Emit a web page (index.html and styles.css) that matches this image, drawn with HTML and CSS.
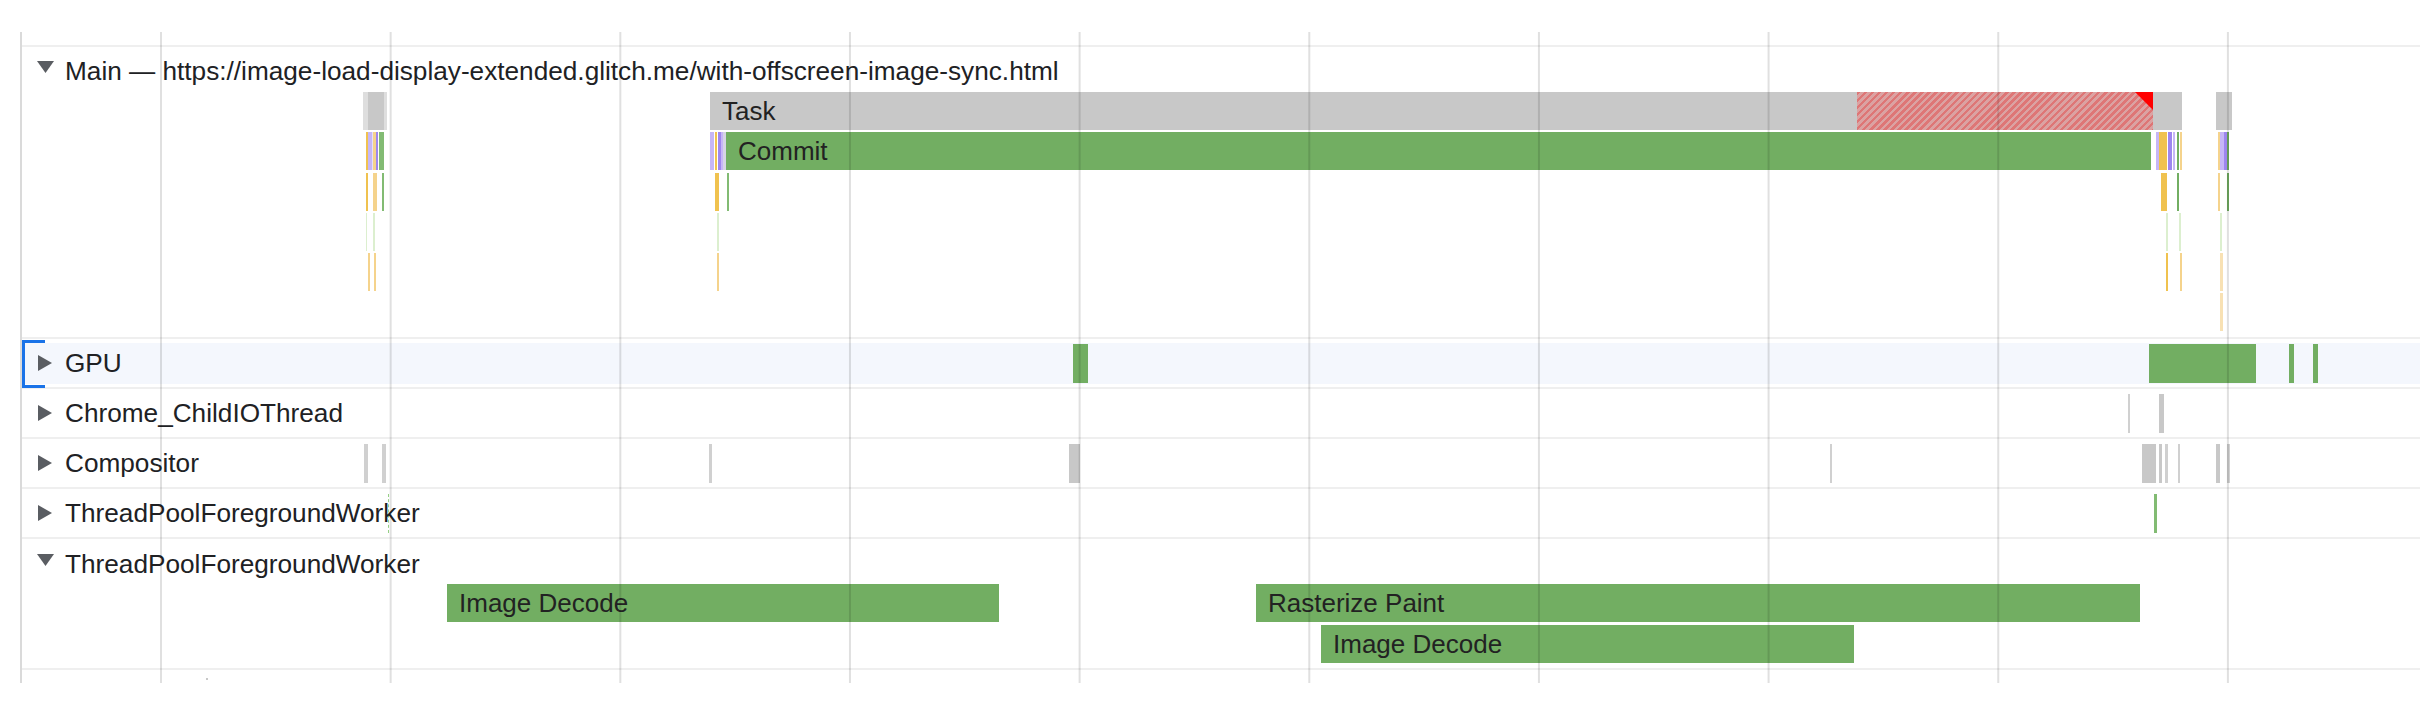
FILE: index.html
```html
<!DOCTYPE html>
<html lang="en">
<head>
<meta charset="utf-8">
<title>Performance timeline</title>
<link rel="stylesheet" href="styles.css">
</head>
<body>
<div class="timeline">
  <section class="track main">
    <div class="track-head"><svg class="tri-down" width="17" height="12" viewBox="0 0 17 12"><polygon points="0,0 17,0 8.5,12"/></svg><span class="name">Main — https://image-load-display-extended.glitch.me/with-offscreen-image-sync.html</span></div>
    <div class="flame main-flame">
      <!-- level 0 -->
      <div class="b l0 gyl" style="left:341px;width:5px"></div>
      <div class="b l0 gy" style="left:346px;width:16px"></div>
      <div class="b l0 gyl" style="left:362px;width:3px"></div>
      <div class="b l0 gy lbl" style="left:688px;width:1472px">Task<span class="hatch" style="left:1147px;width:296px"><span class="flag"></span></span></div>
      <div class="b l0 gy" style="left:2194px;width:16px"></div>
      <!-- level 1 -->
      <div class="b l1 y" style="left:344px;width:2px"></div>
      <div class="b l1 pl" style="left:346px;width:4px"></div>
      <div class="b l1 pll" style="left:350px;width:1px"></div>
      <div class="b l1 yl" style="left:351px;width:3px"></div>
      <div class="b l1 p" style="left:354px;width:2px"></div>
      <div class="b l1 gl" style="left:357px;width:5px"></div>
      <div class="b l1 pl" style="left:688px;width:4px"></div>
      <div class="b l1 y" style="left:693px;width:2px"></div>
      <div class="b l1 p" style="left:696px;width:3px"></div>
      <div class="b l1 pl" style="left:699px;width:2px"></div>
      <div class="b l1 pg" style="left:701px;width:3px"></div>
      <div class="b l1 g lbl" style="left:704px;width:1425px">Commit</div>
      <div class="b l1 pl" style="left:2134px;width:3px"></div>
      <div class="b l1 y" style="left:2137px;width:8px"></div>
      <div class="b l1 p" style="left:2146px;width:4px"></div>
      <div class="b l1 pl" style="left:2151px;width:2px"></div>
      <div class="b l1 g" style="left:2155px;width:2px"></div>
      <div class="b l1 yl" style="left:2158px;width:2px"></div>
      <div class="b l1 yl" style="left:2196px;width:2px"></div>
      <div class="b l1 pl" style="left:2198px;width:4px"></div>
      <div class="b l1 p" style="left:2202px;width:3px"></div>
      <div class="b l1 g" style="left:2205px;width:2px"></div>
      <!-- level 2 -->
      <div class="b l2 y" style="left:344px;width:2px"></div>
      <div class="b l2 yl" style="left:351px;width:4px"></div>
      <div class="b l2 gl" style="left:360px;width:2px"></div>
      <div class="b l2 y" style="left:693px;width:4px"></div>
      <div class="b l2 gl" style="left:705px;width:2px"></div>
      <div class="b l2 y" style="left:2139px;width:6px"></div>
      <div class="b l2 g" style="left:2155px;width:2px"></div>
      <div class="b l2 yl" style="left:2196px;width:2px"></div>
      <div class="b l2 g" style="left:2205px;width:2px"></div>
      <!-- level 3 -->
      <div class="b l3 lg" style="left:344px;width:1px"></div>
      <div class="b l3 lg" style="left:351px;width:2px"></div>
      <div class="b l3 lg" style="left:695px;width:2px"></div>
      <div class="b l3 lg" style="left:2144px;width:2px"></div>
      <div class="b l3 lg" style="left:2157px;width:2px"></div>
      <div class="b l3 lg" style="left:2198px;width:2px"></div>
      <!-- level 4 -->
      <div class="b l4 yl" style="left:346px;width:2px"></div>
      <div class="b l4 yl" style="left:352px;width:2px"></div>
      <div class="b l4 yl" style="left:695px;width:2px"></div>
      <div class="b l4 y" style="left:2144px;width:2px"></div>
      <div class="b l4 yl" style="left:2158px;width:2px"></div>
      <div class="b l4 yll" style="left:2198px;width:3px"></div>
      <!-- level 5 -->
      <div class="b l5 yll" style="left:2198px;width:3px"></div>
    </div>
  </section>

  <section class="row gpu">
    <div class="hl"></div>
    <div class="bracket"></div>
    <div class="row-head"><svg class="tri-right" width="14" height="16" viewBox="0 0 14 16"><polygon points="0,0 14,8 0,16"/></svg><span class="name">GPU</span></div>
    <div class="rb g" style="left:1051px;width:15px"></div>
    <div class="rb g" style="left:2127px;width:107px"></div>
    <div class="rb g" style="left:2267px;width:5px"></div>
    <div class="rb g" style="left:2291px;width:5px"></div>
  </section>

  <section class="row">
    <div class="row-head"><svg class="tri-right" width="14" height="16" viewBox="0 0 14 16"><polygon points="0,0 14,8 0,16"/></svg><span class="name">Chrome_ChildIOThread</span></div>
    <div class="rb gyt" style="left:2106px;width:2px"></div>
    <div class="rb gy" style="left:2137px;width:5px"></div>
  </section>

  <section class="row">
    <div class="row-head"><svg class="tri-right" width="14" height="16" viewBox="0 0 14 16"><polygon points="0,0 14,8 0,16"/></svg><span class="name">Compositor</span></div>
    <div class="rb gyt" style="left:342px;width:4px"></div>
    <div class="rb gyt" style="left:360px;width:4px"></div>
    <div class="rb gyt" style="left:687px;width:3px"></div>
    <div class="rb gy" style="left:1047px;width:11px"></div>
    <div class="rb gyt" style="left:1808px;width:2px"></div>
    <div class="rb gy" style="left:2120px;width:14px"></div>
    <div class="rb gy" style="left:2137px;width:3px"></div>
    <div class="rb gyt" style="left:2143px;width:3px"></div>
    <div class="rb gyt" style="left:2156px;width:2px"></div>
    <div class="rb gy" style="left:2194px;width:4px"></div>
    <div class="rb gyt" style="left:2205px;width:3px"></div>
  </section>

  <section class="row">
    <div class="row-head"><svg class="tri-right" width="14" height="16" viewBox="0 0 14 16"><polygon points="0,0 14,8 0,16"/></svg><span class="name">ThreadPoolForegroundWorker</span></div>
    <div class="rb dotted" style="left:366px;width:1px"></div>
    <div class="rb gl" style="left:2132px;width:3px"></div>
  </section>

  <section class="track worker">
    <div class="track-head"><svg class="tri-down" width="17" height="12" viewBox="0 0 17 12"><polygon points="0,0 17,0 8.5,12"/></svg><span class="name">ThreadPoolForegroundWorker</span></div>
    <div class="flame worker-flame">
      <div class="b l0 g lbl" style="left:425px;width:552px">Image Decode</div>
      <div class="b l0 g lbl" style="left:1234px;width:884px">Rasterize Paint</div>
      <div class="b w1 g lbl" style="left:1299px;width:533px">Image Decode</div>
    </div>
  </section>

  <div class="tail"><span class="tick"></span></div>
  <div class="grid"></div>
</div>
</body>
</html>
```

FILE: styles.css
```css
html, body {
  margin: 0;
  padding: 0;
  background: #ffffff;
}

body {
  font-family: "Liberation Sans", Arial, Helvetica, sans-serif;
  font-size: 26px;
  color: #202124;
}

.timeline {
  position: relative;
  box-sizing: border-box;
  width: 2400px;
  margin: 32px 0 0 20px;
  padding-top: 13px;
  border-left: 2px solid #dadada;
  overflow: hidden;
}

.grid {
  position: absolute;
  inset: 0;
  pointer-events: none;
  background-image: linear-gradient(to right, rgba(0, 0, 0, 0.12) 0, rgba(0, 0, 0, 0.12) 2px, transparent 2px);
  background-size: 229.67px 100%;
  background-position: 138px 0;
  background-repeat: repeat-x;
  z-index: 5;
}

.track {
  border-top: 2px solid #efefef;
}

.main {
  padding-bottom: 5px;
}

.worker {
  padding-bottom: 4px;
}

.track-head {
  height: 45px;
  line-height: 48px;
  padding-left: 15px;
  white-space: nowrap;
  font-size: 26.2px;
}

.worker .track-head {
  line-height: 50px;
}

.tri-down {
  fill: #5a5d62;
  vertical-align: 7px;
  margin-right: 11px;
}

.tri-right {
  fill: #5a5d62;
  vertical-align: 1px;
  margin-left: 1px;
  margin-right: 13px;
}

.flame {
  position: relative;
}

.main-flame {
  height: 240px;
}

.worker-flame {
  height: 80px;
}

.row {
  position: relative;
  height: 48px;
  border-top: 2px solid #efefef;
}

.row-head {
  position: relative;
  height: 48px;
  line-height: 48px;
  padding-left: 15px;
  white-space: nowrap;
  font-size: 26.2px;
  z-index: 1;
}

.gpu .hl {
  position: absolute;
  left: 0;
  right: 0;
  top: 4px;
  height: 41px;
  background: #f4f7fd;
}

.gpu .bracket {
  position: absolute;
  left: 0;
  top: 1px;
  width: 20px;
  height: 42px;
  border: 3px solid #1a73e8;
  border-right: none;
  z-index: 2;
}

.b {
  position: absolute;
  height: 38px;
  box-sizing: border-box;
}

.rb {
  position: absolute;
  top: 5px;
  height: 39px;
  box-sizing: border-box;
}

.l0 { top: 0; }
.l1 { top: 40px; }
.l2 { top: 81px; }
.l3 { top: 121px; }
.l4 { top: 161px; }
.l5 { top: 201px; }
.w1 { top: 41px; }

.lbl {
  padding-left: 12px;
  line-height: 38px;
  font-size: 26px;
  color: #222222;
  white-space: nowrap;
  overflow: hidden;
}

.g { background: #72ae62; }
.gl { background: #82bb73; }
.gy { background: #c8c8c8; }
.gyl { background: #dedede; }
.gyt { background: #d0d0d0; }
.y { background: #f0c24f; }
.yl { background: #f5d38c; }
.yll { background: #f8e1b3; }
.p { background: #9e86ee; }
.pl { background: #c6b6f6; }
.pll { background: #e6defb; }
.pg { background: #d6d4e6; }
.lg { background: #dcefcf; }

.dotted {
  border-left: 1px dashed #96d085;
}

.hatch {
  position: absolute;
  top: 0;
  height: 38px;
  background-image: repeating-linear-gradient(135deg, #de7676 0, #de7676 2.5px, #dba2a2 2.5px, #dba2a2 5px);
}

.flag {
  position: absolute;
  top: 0;
  right: 0;
  width: 18px;
  height: 18px;
  background: #ff0000;
  clip-path: polygon(0 0, 100% 0, 100% 100%);
}

.tail {
  position: relative;
  height: 13px;
  border-top: 2px solid #efefef;
}

.tick {
  position: absolute;
  left: 184px;
  top: 8px;
  width: 2px;
  height: 2px;
  background: #c8c8c8;
}
```
